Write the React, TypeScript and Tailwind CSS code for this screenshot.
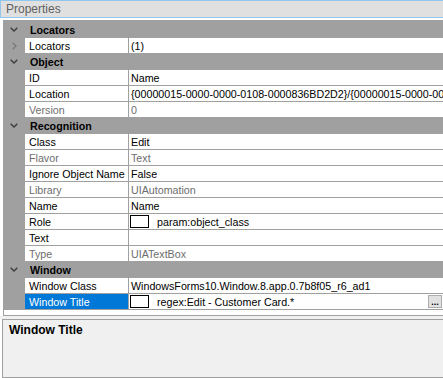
import React from 'react';

interface Prop {
  label: string;
  value: string;
  disabled?: boolean;
  box?: boolean;
  selected?: boolean;
  button?: boolean;
  expandable?: boolean;
}

interface Category {
  name: string;
  items: Prop[];
}

const categories: Category[] = [
  {
    name: 'Locators',
    items: [{ label: 'Locators', value: '(1)', expandable: true }],
  },
  {
    name: 'Object',
    items: [
      { label: 'ID', value: 'Name' },
      {
        label: 'Location',
        value: '{00000015-0000-0000-0108-0000836BD2D2}/{00000015-0000-0000-0108-0000836BD2D2}',
      },
      { label: 'Version', value: '0', disabled: true },
    ],
  },
  {
    name: 'Recognition',
    items: [
      { label: 'Class', value: 'Edit' },
      { label: 'Flavor', value: 'Text', disabled: true },
      { label: 'Ignore Object Name', value: 'False' },
      { label: 'Library', value: 'UIAutomation', disabled: true },
      { label: 'Name', value: 'Name' },
      { label: 'Role', value: 'param:object_class', box: true },
      { label: 'Text', value: '' },
      { label: 'Type', value: 'UIATextBox', disabled: true },
    ],
  },
  {
    name: 'Window',
    items: [
      { label: 'Window Class', value: 'WindowsForms10.Window.8.app.0.7b8f05_r6_ad1' },
      { label: 'Window Title', value: 'regex:Edit - Customer Card.*', box: true, selected: true, button: true },
    ],
  },
];

const ChevronDown = () => (
  <svg width="8" height="5" viewBox="0 0 8 5" className="shrink-0">
    <polyline points="0.7,0.7 4,4 7.3,0.7" fill="none" stroke="#3c3c3c" strokeWidth="1.4" />
  </svg>
);

const ChevronRight = () => (
  <svg width="5" height="8" viewBox="0 0 5 8" className="shrink-0">
    <polyline points="0.7,0.7 4,4 0.7,7.3" fill="none" stroke="#7c7c7c" strokeWidth="1.4" />
  </svg>
);

const PropRow = ({ item }: { item: Prop }) => (
  <div className="flex h-[16px] border-t border-[#a0a0a0]">
    <div className="w-[21px] shrink-0 bg-[#a0a0a0] flex items-center justify-center">
      {item.expandable && <ChevronRight />}
    </div>
    <div
      className={`w-[104px] shrink-0 border-r border-[#a0a0a0] pl-[4px] pt-[1px] flex items-center whitespace-nowrap overflow-hidden ${
        item.selected ? 'bg-[#0078d7] text-white' : item.disabled ? 'bg-white text-[#6d6d6d]' : 'bg-white text-black'
      }`}
    >
      {item.label}
    </div>
    <div
      className={`flex-1 min-w-0 bg-white flex items-center whitespace-nowrap overflow-hidden ${
        item.disabled ? 'text-[#6d6d6d]' : 'text-black'
      }`}
    >
      {item.box ? (
        <>
          <div className="ml-[1px] w-[19px] h-[13px] border border-black bg-white shrink-0" />
          <span className="ml-[8px] pt-[1px]">{item.value}</span>
        </>
      ) : (
        <span className="pl-[2px] pt-[1px]">{item.value}</span>
      )}
      {item.button && (
        <div className="ml-auto mr-[1px] w-[14px] h-[13px] shrink-0 bg-[#e1e1e1] border border-[#adadad] flex items-end justify-center text-[9px] leading-[9px] font-bold">
          ...
        </div>
      )}
    </div>
  </div>
);

const App = () => {
  return (
    <div
      className="w-[443px] h-[378px] bg-white overflow-hidden flex flex-col text-[10.7px] leading-none"
      style={{ fontFamily: '"Liberation Sans", Arial, sans-serif' }}
    >
      <div className="h-[18px] shrink-0 bg-[#e0e0e0] border-y border-l border-[#92c6ec] flex items-center pl-[5px] text-[12px] text-[#5f5f5f]">
        Properties
      </div>
      <div className="h-[2px] shrink-0" />

      <div className="ml-[3px] shrink-0 border-t border-l border-b border-[#a0a0a0] flex flex-col">
        {categories.map((cat) => (
          <React.Fragment key={cat.name}>
            <div className="flex h-[16px] border-t border-[#a0a0a0] bg-[#a0a0a0] items-center">
              <div className="w-[21px] shrink-0 flex items-center pl-[6px]">
                <ChevronDown />
              </div>
              <span className="pl-[5px] pt-[1px] font-bold text-black">{cat.name}</span>
            </div>
            {cat.items.map((item) => (
              <PropRow key={item.label} item={item} />
            ))}
          </React.Fragment>
        ))}
        <div className="h-[6px] border-t border-[#a0a0a0] bg-white" />
      </div>

      <div className="h-[3px] shrink-0 bg-[#f0f0f0]" />

      <div className="ml-[2px] flex-1 bg-[#f0f0f0] border-t border-l border-b border-[#a0a0a0] pl-[6px] pt-[4px]">
        <span className="text-[12px] font-bold text-black">Window Title</span>
      </div>
    </div>
  );
};

export default App;
